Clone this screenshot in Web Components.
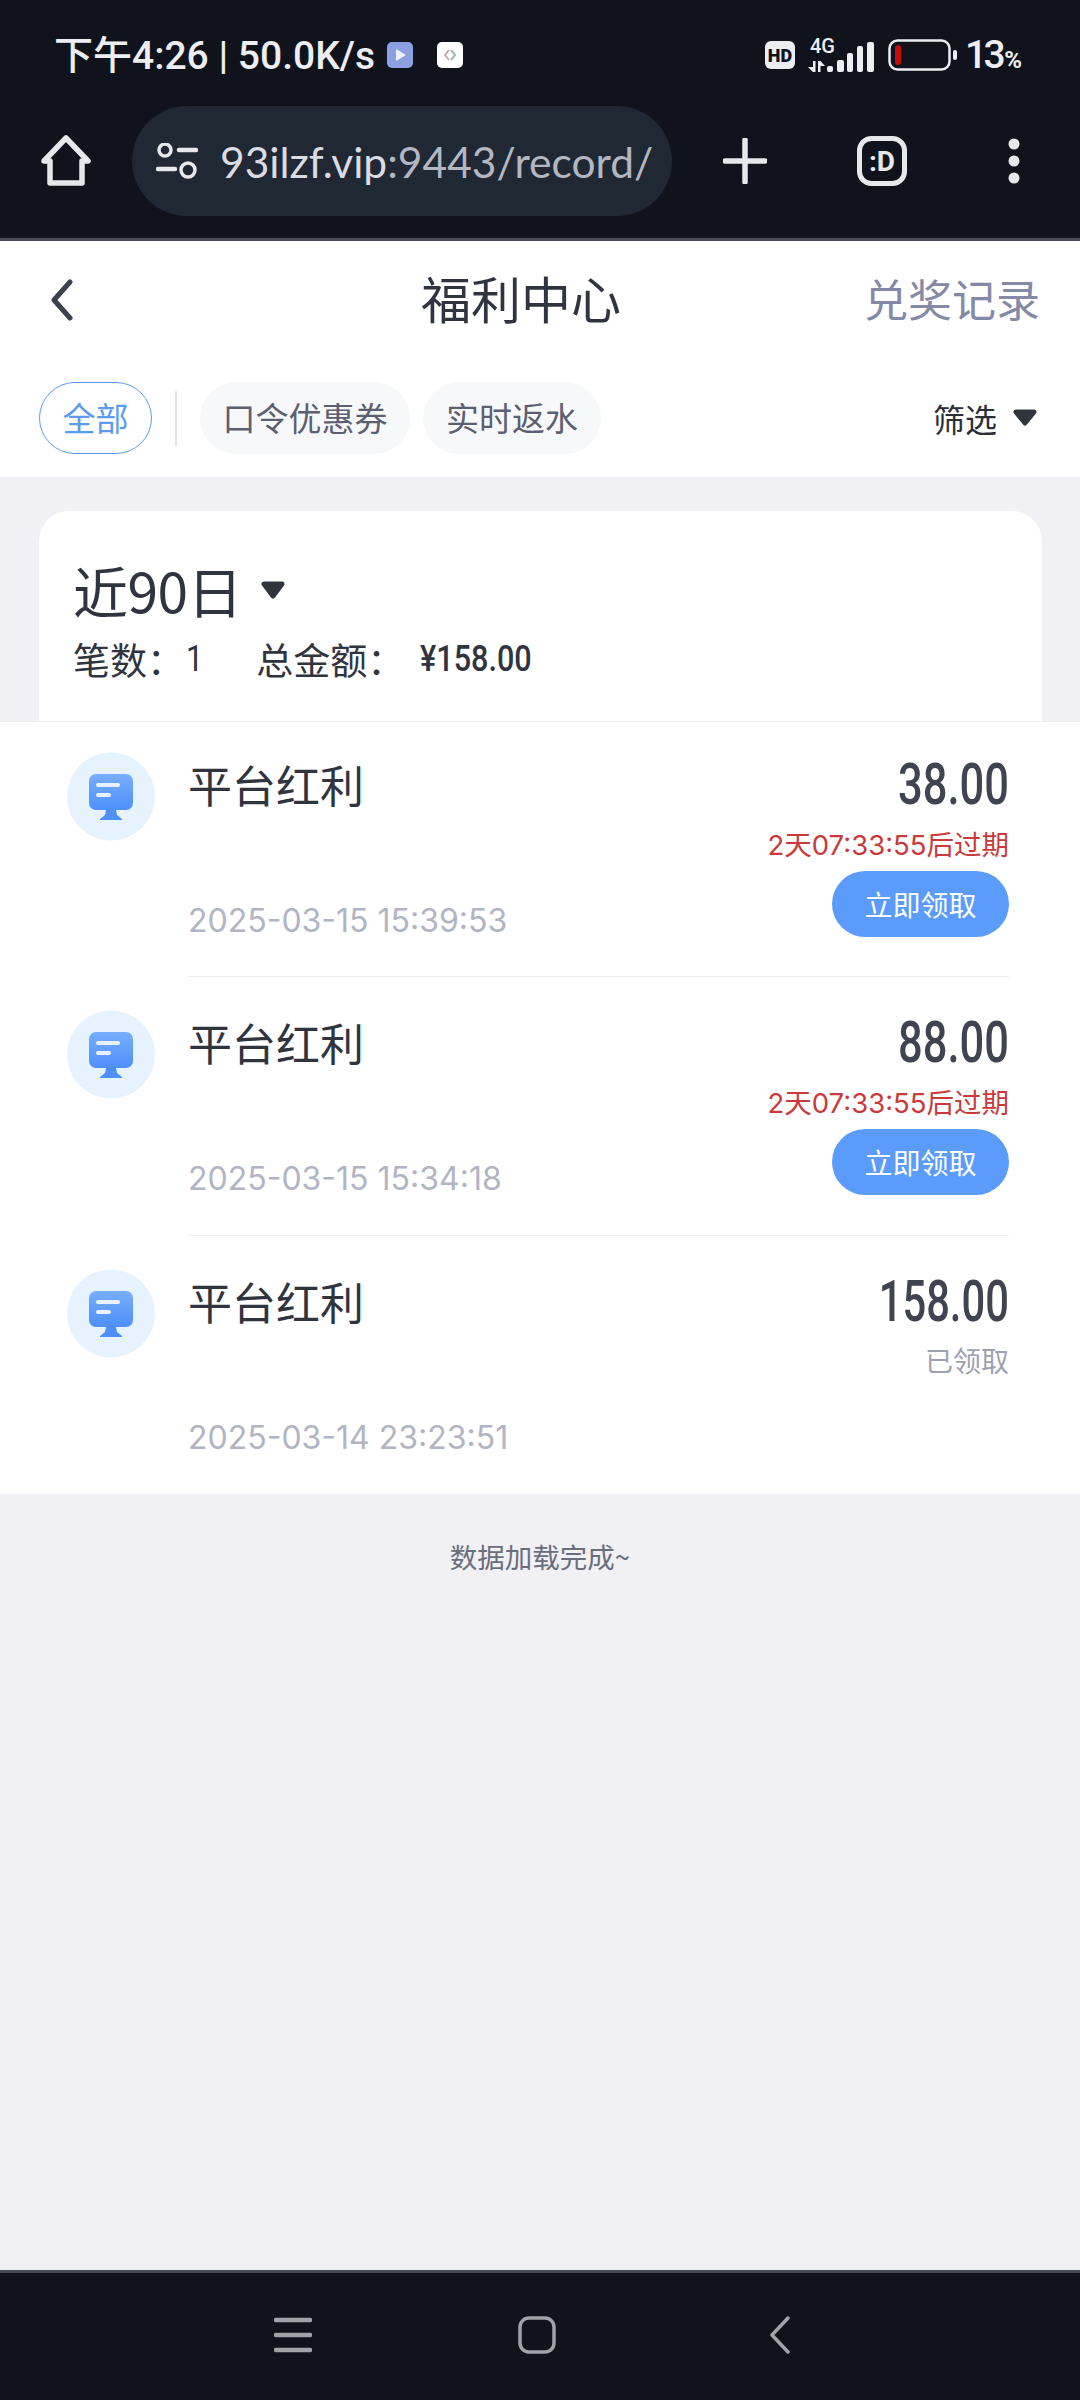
<!DOCTYPE html>
<html lang="zh">
<head>
<meta charset="utf-8">
<title>福利中心</title>
<style>
  html, body { margin: 0; padding: 0; }
  body {
    width: 1080px;
    height: 2400px;
    display: flex;
    flex-direction: column;
    background: #f0f0f5;
    font-family: Inter, "Noto Sans CJK SC", sans-serif;
    overflow: hidden;
  }
</style>
</head>
<body>
<status-bar></status-bar>
<browser-toolbar host="93ilzf.vip" path=":9443/record/"></browser-toolbar>
<page-header></page-header>
<filter-tabs></filter-tabs>
<summary-card></summary-card>
<reward-list>
  <reward-row first amount="38.00" expire="2天07:33:55后过期" date="2025-03-15 15:39:53"></reward-row>
  <reward-row amount="88.00" expire="2天07:33:55后过期" date="2025-03-15 15:34:18"></reward-row>
  <reward-row last amount="158.00" date="2025-03-14 23:23:51"></reward-row>
</reward-list>
<list-end>数据加载完成~</list-end>
<nav-bar></nav-bar>

<script>
const CJK = '"Noto Sans CJK SC", sans-serif';

class StatusBar extends HTMLElement {
  constructor() {
    super();
    this.attachShadow({ mode: 'open' }).innerHTML = `
      <style>
        :host { display: flex; align-items: center; height: 106px; padding: 4px 58px 0 54px; box-sizing: border-box;
          background: #10131c; color: #eceef2; font: 500 39px/50px Roboto, ${CJK}; }
        .t { white-space: nowrap; margin-top: 2px; }
        .ic { display: block; margin-left: 12px; }
        .ic + .ic { margin-left: 24px; }
        .r { margin-left: auto; display: flex; align-items: center; }
        .p { font-size: 39px; margin: 5px 0 0 7px; font-weight: 500; white-space: nowrap; letter-spacing: -3.500px; }
        .p small { font-size: 24px; font-weight: 700; letter-spacing: 0; margin-left: 2px; }
      </style>
      <span class="t">下午4:26 | 50.0K/s</span>
      <svg class="ic" width="26" height="26" viewBox="0 0 26 26"><rect width="26" height="26" rx="5" fill="#8ba0e0"/><path d="M9 7l10 6-10 6z" fill="#eef1fb"/></svg>
      <svg class="ic" width="26" height="26" viewBox="0 0 26 26"><rect width="26" height="26" rx="5" fill="#fff"/><path d="M12 8l-4 5 4 5" fill="none" stroke="#c9a8a8" stroke-width="2"/><path d="M14 8l4 5-4 5" fill="none" stroke="#8fb8bc" stroke-width="2"/></svg>
      <div class="r">
        <svg width="30" height="28" viewBox="0 0 30 28"><rect width="30" height="28" rx="6" fill="#eceef2"/><text x="15" y="20.500" text-anchor="middle" font-family="Roboto" font-weight="900" font-size="18" fill="#10131c">HD</text></svg>
        <svg style="margin:-8px 0 0 12px" width="67" height="44" viewBox="0 -8 67 44">
          <text x="3" y="16" font-family="Roboto" font-size="20" fill="#eceef2">4G</text>
          <path d="M1 30h5v-6h2.500v11H6zM11 24h2.500l4.500 5h-4.500v6H11z" fill="#eceef2"/>
          <g fill="#eceef2"><rect x="20" y="29" width="6" height="6" rx="2"/><rect x="30" y="23" width="7" height="12" rx="2"/><rect x="40" y="16" width="6" height="19" rx="2"/><rect x="50" y="9" width="6" height="26" rx="2"/><rect x="60" y="5" width="7" height="30" rx="2"/></g>
        </svg>
        <svg style="margin-left:14px" width="70" height="32" viewBox="0 0 70 32"><rect x="1.500" y="1.500" width="60" height="29" rx="8" fill="none" stroke="#eceef2" stroke-width="2.500"/><rect x="7" y="6" width="6" height="20" rx="3" fill="#c40d0d"/><rect x="65" y="11" width="4" height="10" rx="2" fill="#eceef2"/></svg>
        <span class="p">13<small>%</small></span>
      </div>`;
  }
}

class BrowserToolbar extends HTMLElement {
  connectedCallback() {
    this.attachShadow({ mode: 'open' }).innerHTML = `
      <style>
        :host { display: flex; align-items: center; height: 135px; padding: 0 0 22px 41px; box-sizing: border-box;
          background: #10131c; border-bottom: 3px solid #4a4d55; color: #e6e8ec; }
        .pill { width: 540px; height: 110px; margin-left: 41px; border-radius: 55px; background: #202833; flex: none;
          display: flex; align-items: center; padding-left: 24px; box-sizing: border-box; }
        .url { margin-left: 22px; font: 400 42.500px/1.200 Lato, ${CJK}; color: #d9dce2; white-space: nowrap; }
        .url span { color: #b3b7c1; }
        svg { display: block; flex: none; }
      </style>
      <svg width="50" height="52" viewBox="0 0 50 52"><path d="M3 26L25 3l22 23h-6v22H9V26z" fill="none" stroke="#e6e8ec" stroke-width="5.500" stroke-linejoin="round"/></svg>
      <div class="pill">
        <svg width="42" height="36" viewBox="0 0 42 36"><circle cx="9" cy="7" r="6" fill="none" stroke="#e6e8ec" stroke-width="3.500"/><path d="M23 7h17M2 26h17" stroke="#e6e8ec" stroke-width="4.500" stroke-linecap="round"/><circle cx="32" cy="27" r="7" fill="none" stroke="#e6e8ec" stroke-width="3.500"/></svg>
        <span class="url">${this.getAttribute('host')}<span>${this.getAttribute('path')}</span></span>
      </div>
      <svg style="margin-left:51px" width="44" height="46" viewBox="0 0 44 46"><path d="M22 2v42M2 23h40" stroke="#e6e8ec" stroke-width="5.500" stroke-linecap="round"/></svg>
      <svg style="margin-left:90px" width="50" height="50" viewBox="0 0 50 50"><rect x="2.500" y="2.500" width="45" height="45" rx="12" fill="none" stroke="#e6e8ec" stroke-width="5"/><text x="25" y="35" text-anchor="middle" font-family="Roboto" font-weight="700" font-size="28" fill="#e6e8ec">:D</text></svg>
      <svg style="margin-left:101px" width="12" height="46" viewBox="0 0 12 46"><circle cx="6" cy="6" r="5.500" fill="#e6e8ec"/><circle cx="6" cy="23" r="5.500" fill="#e6e8ec"/><circle cx="6" cy="40" r="5.500" fill="#e6e8ec"/></svg>`;
  }
}

class PageHeader extends HTMLElement {
  constructor() {
    super();
    this.attachShadow({ mode: 'open' }).innerHTML = `
      <style>
        :host { display: grid; grid-template-columns: 371px 197px 1fr; align-items: center; height: 117px; padding: 0 40px 0 50px;
          background: #fff; font-family: ${CJK}; box-sizing: border-box; }
        .title { font-size: 50px; line-height: 60px; margin-top: -6px; color: #30343f; white-space: nowrap; text-align: center; }
        .link { font-size: 44px; line-height: 60px; margin-top: -4px; color: #8489a8; text-align: right; white-space: nowrap; }
        svg { display: block; }
      </style>
      <svg width="24" height="42" viewBox="0 0 24 42"><path d="M20 3L4 21l16 18" fill="none" stroke="#3d414e" stroke-width="5" stroke-linecap="round" stroke-linejoin="round"/></svg>
      <span class="title">福利中心</span>
      <span class="link">兑奖记录</span>`;
  }
}

class FilterTabs extends HTMLElement {
  constructor() {
    super();
    this.attachShadow({ mode: 'open' }).innerHTML = `
      <style>
        :host { display: flex; align-items: center; height: 119px; padding: 24px 42px 23px 39px; box-sizing: border-box;
          background: #fff; font: 400 33px/1.200 ${CJK}; color: #5b5f70; }
        .chip { height: 72px; display: flex; align-items: center; justify-content: center; border-radius: 36px;
          background: #f7f8fa; white-space: nowrap; box-sizing: border-box; }
        .on { width: 113px; background: #fff; border: 1px solid #5b9bf0; color: #5b9bf0; }
        .sep { width: 2px; height: 55px; background: #e3e4e8; margin: 0 23px 0 23px; }
        .a { width: 210px; }
        .b { width: 178px; margin-left: 13px; }
        .filter { margin-left: auto; display: flex; align-items: center; gap: 15px; color: #2b2e39; font-size: 32px; }
        svg { display: block; }
      </style>
      <div class="chip on">全部</div>
      <div class="sep"></div>
      <div class="chip a">口令优惠券</div>
      <div class="chip b">实时返水</div>
      <div class="filter">筛选<svg width="26" height="17" viewBox="0 0 26 17"><path d="M4 3h18L13 14z" fill="#2f343d" stroke="#2f343d" stroke-width="5" stroke-linejoin="round"/></svg></div>`;
  }
}

class SummaryCard extends HTMLElement {
  constructor() {
    super();
    this.attachShadow({ mode: 'open' }).innerHTML = `
      <style>
        :host { display: block; margin: 34px 38px 0 39px; height: 210px; padding: 46px 34px 0; box-sizing: border-box;
          background: #fff; border-radius: 30px 30px 0 0; color: #30343f; font-family: ${CJK}; }
        .range { display: flex; align-items: center; font-size: 55px; line-height: 64px; white-space: nowrap; letter-spacing: -0.500px; }
        .range svg { display: block; margin: 2px 0 0 18px; }
        .stats { display: flex; align-items: center; font-size: 37px; line-height: 52px; margin-top: 12px; white-space: nowrap; }
        .num { display: inline-block; font: 400 36px/52px Roboto, sans-serif; transform: scaleX(.85); transform-origin: left center; }
        .total { margin-left: 50px; }
      </style>
      <div class="range">近90日<svg width="26" height="18" viewBox="0 0 26 18"><path d="M4 3h18L13 15z" fill="#2f343d" stroke="#2f343d" stroke-width="5" stroke-linejoin="round"/></svg></div>
      <div class="stats"><span>笔数：</span><span class="num" style="margin-left:2px">1</span><span class="total">总金额：</span><span class="num" style="margin-left:16px;font-weight:500">¥158.00</span></div>`;
  }
}

class RewardList extends HTMLElement {
  constructor() {
    super();
    this.attachShadow({ mode: 'open' }).innerHTML = `
      <style>
        :host { display: block; background: #fff; border-top: 1px solid #eeeef0; }
      </style>
      <slot></slot>`;
  }
}

class RewardRow extends HTMLElement {
  connectedCallback() {
    const amount = this.getAttribute('amount');
    const expire = this.getAttribute('expire');
    const date = this.getAttribute('date');
    const first = this.hasAttribute('first');
    const last = this.hasAttribute('last');
    const top = first ? 30 : 33;
    const side = expire
      ? `<div class="exp">${expire}</div><div class="btn">立即领取</div>`
      : `<div class="done">已领取</div>`;
    this.attachShadow({ mode: 'open' }).innerHTML = `
      <style>
        :host { display: flex; height: ${first ? 255 : last ? 258 : 259}px; padding: 0 71px 0 67px; box-sizing: border-box; }
        svg { display: block; flex: none; margin-top: ${top}px; }
        .body { flex: 1; display: flex; margin-left: 33px; padding-top: ${top}px; box-sizing: border-box;
          border-bottom: ${last ? 0 : 1}px solid #eeeef0; }
        .left { flex: 1; }
        .name { font: 400 44px/60px ${CJK}; color: #30343f; margin-top: 2px; white-space: nowrap; }
        .date { font: 400 32px/40px Inter, sans-serif; color: #b1b5c3; margin-top: 87px; white-space: nowrap; }
        .right { display: flex; flex-direction: column; align-items: flex-end; }
        .amt { display: inline-block; font: 500 58px/60px Roboto, sans-serif; color: #3f4450; margin-top: 2px;
          transform: scaleX(${amount.length > 5 ? .72 : .75}); transform-origin: right center; }
        .exp { font: 400 27.500px/36px Inter, ${CJK}; color: #c93a3a; margin-top: 13px; white-space: nowrap; }
        .btn { width: 177px; height: 66px; margin: 8px 0 0 0; border-radius: 33px; background: #5b9bfb; color: #fff;
          font: 400 28px/66px ${CJK}; text-align: center; }
        .done { font: 400 28px/36px ${CJK}; color: #9da1b0; margin-top: 11px; }
      </style>
      <svg width="88" height="89" viewBox="0 0 88 89">
        <defs><linearGradient id="g" x1="0" y1="0" x2="0" y2="1"><stop offset="0" stop-color="#78aefc"/><stop offset="1" stop-color="#4e8ffa"/></linearGradient></defs>
        <circle cx="44" cy="44.500" r="44" fill="#e6f3fe"/>
        <rect x="22" y="22" width="44" height="36" rx="7" fill="url(#g)"/>
        <path d="M39 58h10l1 5 5 4v1H33v-1l5-4z" fill="#4e8ffa"/>
        <rect x="29" y="31" width="24" height="4" rx="2" fill="#e8f2ff"/>
        <rect x="29" y="41" width="15" height="4" rx="2" fill="#e8f2ff"/>
      </svg>
      <div class="body">
        <div class="left"><div class="name">平台红利</div><div class="date">${date}</div></div>
        <div class="right"><div class="amt">${amount}</div>${side}</div>
      </div>`;
  }
}

class ListEnd extends HTMLElement {
  constructor() {
    super();
    this.attachShadow({ mode: 'open' }).innerHTML = `
      <style>
        :host { display: block; flex: 1; padding-top: 42px; box-sizing: border-box; text-align: center;
          font: 400 27.500px/40px ${CJK}; color: #6a6e7c; }
      </style>
      <slot></slot>`;
  }
}

class NavBar extends HTMLElement {
  constructor() {
    super();
    this.attachShadow({ mode: 'open' }).innerHTML = `
      <style>
        :host { display: flex; align-items: center; height: 130px; padding: 0 0 4px 274px; box-sizing: border-box;
          background: #10131c; border-top: 3px solid #464a55; }
        svg { display: block; }
      </style>
      <svg width="38" height="36" viewBox="0 0 38 36"><path d="M2 3h34M2 18h34M2 33h34" stroke="#a0a2a8" stroke-width="4.500" stroke-linecap="round"/></svg>
      <svg style="margin-left:206px" width="38" height="38" viewBox="0 0 38 38"><rect x="2" y="2" width="34" height="34" rx="9" fill="none" stroke="#a0a2a8" stroke-width="3.500"/></svg>
      <svg style="margin-left:213px" width="22" height="38" viewBox="0 0 22 38"><path d="M19 2L3 19l16 17" fill="none" stroke="#a0a2a8" stroke-width="3.500" stroke-linecap="round" stroke-linejoin="round"/></svg>`;
  }
}

customElements.define('status-bar', StatusBar);
customElements.define('browser-toolbar', BrowserToolbar);
customElements.define('page-header', PageHeader);
customElements.define('filter-tabs', FilterTabs);
customElements.define('summary-card', SummaryCard);
customElements.define('reward-list', RewardList);
customElements.define('reward-row', RewardRow);
customElements.define('list-end', ListEnd);
customElements.define('nav-bar', NavBar);
</script>
</body>
</html>
